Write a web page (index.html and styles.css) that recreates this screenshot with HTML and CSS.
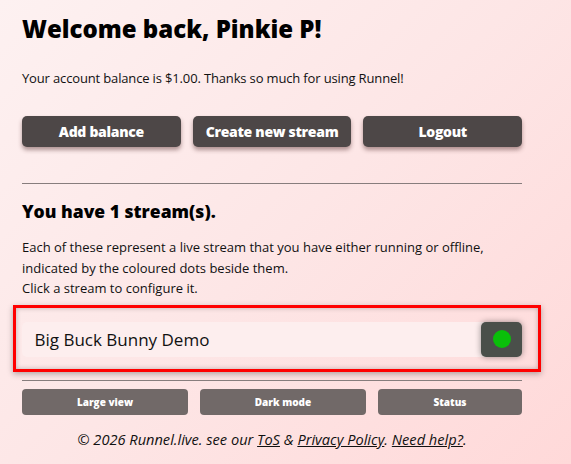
FILE: index.html
```html
<!DOCTYPE html>
<html>
<head>
<meta charset="utf-8">
<link rel="stylesheet" href="styles.css">
</head>
<body>
<main class="page">
  <h1 class="title">Welcome back, Pinkie P!</h1>
  <p class="balance">Your account balance is $1.00. Thanks so much for using Runnel!</p>
  <div class="actions">
    <button class="btn">Add balance</button>
    <button class="btn">Create new stream</button>
    <button class="btn">Logout</button>
  </div>
  <hr class="rule rule-top">
  <h2 class="subtitle">You have 1 stream(s).</h2>
  <p class="info">Each of these represent a live stream that you have either running or offline,<br>indicated by the coloured dots beside them.<br>Click a stream to configure it.</p>
  <div class="streams">
    <div class="stream">
      <span class="stream-name">Big Buck Bunny Demo</span>
      <span class="status"><span class="dot"></span></span>
    </div>
  </div>
  <hr class="rule rule-bottom">
  <div class="small-actions">
    <button class="sbtn">Large view</button>
    <button class="sbtn">Dark mode</button>
    <button class="sbtn">Status</button>
  </div>
  <p class="footer">© 2026 Runnel.live. see our <a href="#">ToS</a> &amp; <a href="#">Privacy Policy</a>. <a href="#">Need help?</a>.</p>
</main>
</body>
</html>
```
FILE: styles.css
```css
html, body {
  margin: 0;
  padding: 0;
  height: 100%;
}
body {
  background: linear-gradient(135deg, #fdf1f1 0%, #fde6e6 50%, #ffd9d9 100%);
  font-family: "Open Sans", "DejaVu Sans", sans-serif;
  color: #111;
}
.page {
  width: 500px;
  padding: 12px 0 0 22px;
}
.title {
  margin: 0;
  font-size: 24px;
  font-weight: 800;
  line-height: 34px;
  color: #000;
}
.balance {
  margin: 23px 0 0;
  font-size: 13px;
  letter-spacing: -0.15px;
  line-height: 18px;
}
.actions {
  display: grid;
  grid-template-columns: repeat(3, 1fr);
  gap: 12px;
  margin-top: 29px;
}
.btn {
  height: 31px;
  border: none;
  border-radius: 5px;
  background: #4d4747;
  color: #fff;
  font-family: inherit;
  font-size: 14px;
  font-weight: 800;
  letter-spacing: -0.3px;
  box-shadow: 0 3px 4px rgba(80, 40, 40, 0.45);
}
.rule {
  border: none;
  border-top: 1px solid #877d7d;
  margin: 0;
}
.rule-top {
  margin-top: 36px;
}
.subtitle {
  margin: 17px 0 0;
  font-size: 17.5px;
  font-weight: 800;
  line-height: 20px;
  color: #000;
}
.info {
  margin: 16px 0 0;
  font-size: 13px;
  line-height: 20.5px;
}
.streams {
  margin: 6px -19px 0 -9px;
  border: 3.5px solid #ff0000;
  padding: 14px 16px 12px 5.5px;
  box-shadow: 0 2px 6px rgba(0, 0, 0, 0.3), inset 0 0 5px rgba(0, 0, 0, 0.25);
}
.stream {
  display: flex;
  align-items: stretch;
  height: 35px;
  background: #fdeeee;
  border-radius: 5px;
}
.stream-name {
  flex: 1;
  display: flex;
  align-items: center;
  padding-left: 13px;
  font-size: 17px;
  color: #111;
}
.status {
  width: 41px;
  display: flex;
  align-items: center;
  justify-content: center;
  background: #4a4f4a;
  border-radius: 5px;
  box-shadow: 0 0 6px rgba(0, 0, 0, 0.4);
}
.dot {
  width: 18px;
  height: 18px;
  border-radius: 50%;
  background: #0abf0a;
}
.rule-bottom {
  margin-top: 8px;
}
.small-actions {
  display: grid;
  grid-template-columns: 166px 166px 1fr;
  gap: 12px;
  margin-top: 8px;
}
.sbtn {
  height: 26px;
  border: none;
  border-radius: 4px;
  background: #716968;
  color: #fff;
  font-family: inherit;
  font-size: 10px;
  font-weight: 800;
}
.footer {
  margin: 15px 0 0;
  text-align: center;
  font-size: 14.6px;
  font-style: italic;
  line-height: 18px;
}
.footer a {
  color: inherit;
}
```
